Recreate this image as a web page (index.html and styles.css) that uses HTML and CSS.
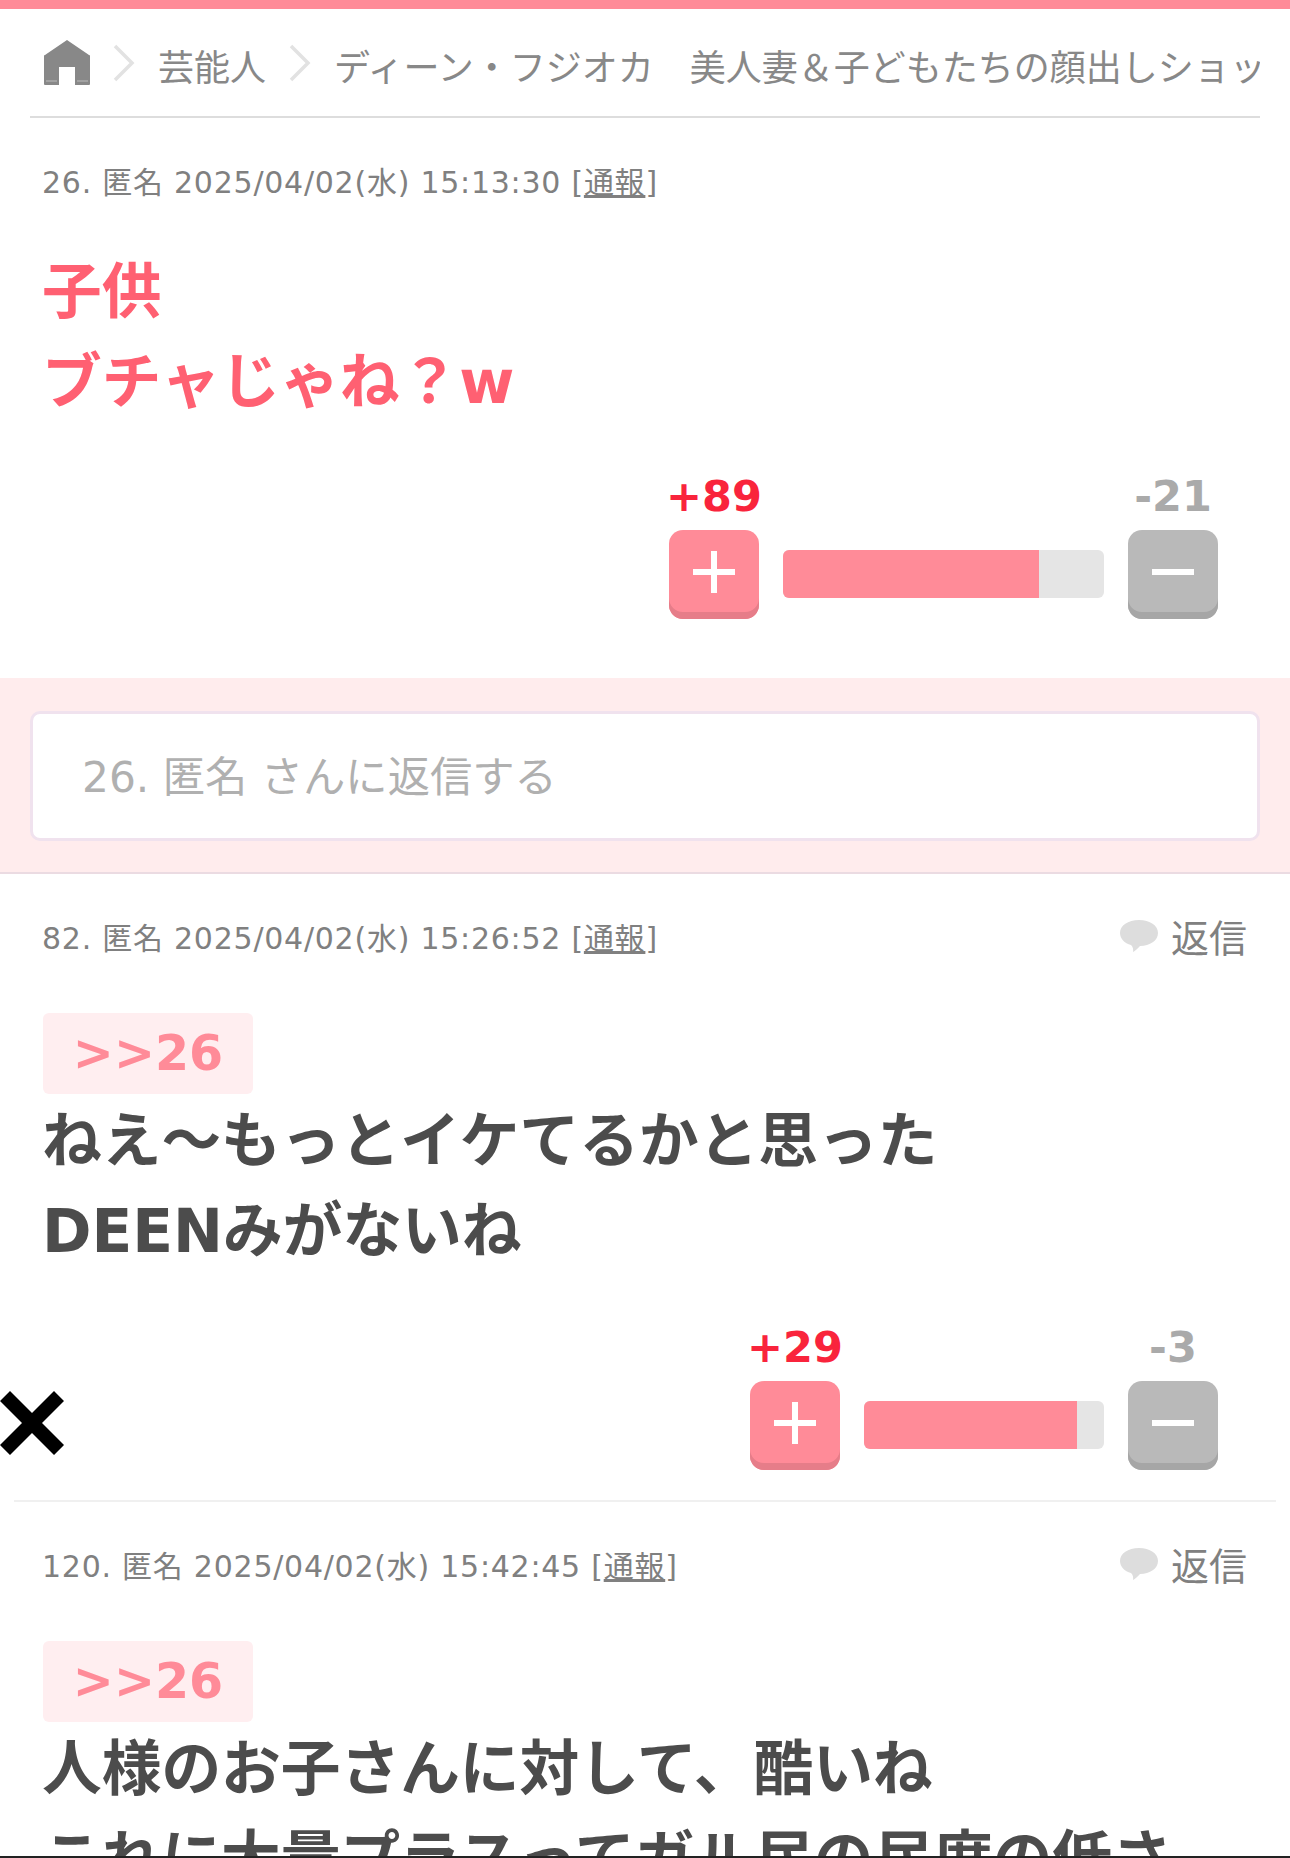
FILE: index.html
```html
<!DOCTYPE html>
<html lang="ja">
<head>
    <meta charset="UTF-8">
    <meta name="viewport" content="width=device-width, initial-scale=1.0">
    <title>ディーン・フジオカ 美人妻&子どもたちの顔出しショット</title>
    <link rel="stylesheet" href="styles.css">
</head>
<body>
    <!-- Breadcrumb -->
    <nav class="breadcrumb">
        <a class="crumb-home" href="#">
            <svg viewBox="0 0 46 46" width="46" height="46"><path d="M23 0 L45 15 a1.500 1.500 0 0 1 1 2 V44 a1 1 0 0 1 -1 1 H31 V27 H15 V45 H1 a1 1 0 0 1 -1 -1 V17 a1.500 1.500 0 0 1 1 -2 Z" fill="#888"/><path d="M2 41h11M33 41h11" stroke="#aaa" stroke-width="1.500"/></svg>
        </a>
        <svg class="crumb-sep" viewBox="0 0 22 38" width="22" height="38"><path d="M2 2 L19 19 L2 36" fill="none" stroke="#e2e2e2" stroke-width="3.500"/></svg>
        <a class="crumb-link" href="#">芸能人</a>
        <svg class="crumb-sep" viewBox="0 0 22 38" width="22" height="38"><path d="M2 2 L19 19 L2 36" fill="none" stroke="#e2e2e2" stroke-width="3.500"/></svg>
        <a class="crumb-link" href="#">ディーン・フジオカ　美人妻＆子どもたちの顔出しショット</a>
    </nav>

    <!-- Parent comment -->
    <section class="comment comment-parent">
        <div class="meta">
            <span>26. 匿名 2025/04/02(水) 15:13:30 [<a href="#">通報</a>]</span>
        </div>
        <div class="body body-hot">子供<br>ブチャじゃね？w</div>
        <div class="votes">
            <div class="vote">
                <span class="count count-plus">+89</span>
                <div class="btn btn-plus"><svg viewBox="0 0 42 42" width="42" height="42"><path d="M18 0h6v18h18v6h-18v18h-6v-18h-18v-6h18z" fill="#fff"/></svg></div>
            </div>
            <div class="bar bar-wide"><div class="bar-fill fill-89"></div></div>
            <div class="vote">
                <span class="count count-minus">-21</span>
                <div class="btn btn-minus"><svg viewBox="0 0 42 42" width="42" height="42"><path d="M0 18h42v6h-42z" fill="#fff"/></svg></div>
            </div>
        </div>
    </section>

    <!-- Reply box -->
    <section class="reply-area">
        <div class="reply-box">26. 匿名 さんに返信する</div>
    </section>

    <!-- Replies -->
    <section class="comment comment-reply">
        <div class="meta">
            <span>82. 匿名 2025/04/02(水) 15:26:52 [<a href="#">通報</a>]</span>
            <a class="reply-link" href="#">
                <svg viewBox="0 0 38 32" width="38" height="32"><path d="M19 0 C30 0 38 5.500 38 13 C38 20.500 30 26 20 26 C18 28.500 15 31 13 32 C13.500 29.500 13 27 11 25 C4.500 23.500 0 18.500 0 13 C0 5.500 8 0 19 0 Z" fill="#ddd"/></svg>
                返信
            </a>
        </div>
        <div class="anchor">&gt;&gt;26</div>
        <div class="body">ねえ〜もっとイケてるかと思った<br>DEENみがないね</div>
        <div class="votes">
            <div class="vote">
                <span class="count count-plus">+29</span>
                <div class="btn btn-plus"><svg viewBox="0 0 42 42" width="42" height="42"><path d="M18 0h6v18h18v6h-18v18h-6v-18h-18v-6h18z" fill="#fff"/></svg></div>
            </div>
            <div class="bar bar-narrow"><div class="bar-fill fill-29"></div></div>
            <div class="vote">
                <span class="count count-minus">-3</span>
                <div class="btn btn-minus"><svg viewBox="0 0 42 42" width="42" height="42"><path d="M0 18h42v6h-42z" fill="#fff"/></svg></div>
            </div>
        </div>
        <svg class="close-x" viewBox="0 0 64 64" width="64" height="64"><path d="M10 0 L32 22 L54 0 L64 10 L42 32 L64 54 L54 64 L32 42 L10 64 L0 54 L22 32 L0 10 Z" fill="#000"/></svg>
    </section>

    <section class="comment comment-reply comment-last">
        <div class="meta">
            <span>120. 匿名 2025/04/02(水) 15:42:45 [<a href="#">通報</a>]</span>
            <a class="reply-link" href="#">
                <svg viewBox="0 0 38 32" width="38" height="32"><path d="M19 0 C30 0 38 5.500 38 13 C38 20.500 30 26 20 26 C18 28.500 15 31 13 32 C13.500 29.500 13 27 11 25 C4.500 23.500 0 18.500 0 13 C0 5.500 8 0 19 0 Z" fill="#ddd"/></svg>
                返信
            </a>
        </div>
        <div class="anchor">&gt;&gt;26</div>
        <div class="body">人様のお子さんに対して、酷いね<br>これに大量プラスってガル民の民度の低さ</div>
    </section>

    <div class="bottom-line"></div>
</body>
</html>
```

FILE: styles.css
```css
/* General Styles */
html, body {
    height: 1858px;
    overflow: hidden;
}

body {
    margin: 0;
    position: relative;
    box-sizing: border-box;
    background: #fff;
    color: #4c4c4c;
    font-family: "DejaVu Sans", "Noto Sans CJK JP", sans-serif;
    border-top: 9px solid #ff8b98;
}

a {
    color: inherit;
}

/* Breadcrumb */
.breadcrumb {
    display: flex;
    align-items: center;
    gap: 23px;
    height: 107px;
    margin: 0 30px;
    padding-left: 14px;
    border-bottom: 2px solid #ddd;
    color: #888;
    font-size: 36px;
    white-space: nowrap;
    overflow: hidden;
}

.breadcrumb a {
    text-decoration: none;
}

.crumb-link {
    padding-top: 4px;
}

.crumb-home {
    display: flex;
    flex-shrink: 0;
}

.crumb-sep {
    flex-shrink: 0;
}

/* Comments */
.comment {
    position: relative;
    padding: 0 43px;
}

.comment-parent {
    height: 560px;
}

.comment-parent .body {
    margin-top: 7px;
}

.comment-reply {
    height: 628px;
    margin: 0 14px;
    padding: 0 29px;
    border-bottom: 2px solid #f0f0f0;
    box-sizing: border-box;
}

.comment-last {
    border-bottom: 0;
}

.meta {
    display: flex;
    justify-content: space-between;
    align-items: center;
    height: 123px;
    margin-left: -1px;
    color: #808080;
    font-size: 30px;
    letter-spacing: 0.75px;
}

.reply-link {
    display: flex;
    align-items: center;
    gap: 13px;
    font-size: 38px;
    letter-spacing: 0;
    text-decoration: none;
}

.anchor {
    box-sizing: border-box;
    width: 210px;
    height: 81px;
    margin: 16px 0 3px;
    border-radius: 6px;
    background: #ffeef0;
    color: #ff8b98;
    font-size: 49px;
    font-weight: bold;
    line-height: 81px;
    text-align: center;
}

.body {
    margin-left: -1px;
    color: #4c4c4c;
    font-size: 59.700px;
    font-weight: bold;
    line-height: 90px;
}

.body-hot {
    color: #ff6072;
}

/* Votes */
.votes {
    position: absolute;
    right: 72px;
    display: flex;
    align-items: flex-end;
    gap: 24px;
}

.comment-parent .votes {
    top: 354px;
}

.comment-reply .votes {
    top: 449px;
    right: 58px;
}

.vote {
    display: flex;
    flex-direction: column;
    align-items: center;
    width: 90px;
    gap: 10px;
}

.count {
    font-size: 43px;
    font-weight: bold;
    line-height: 48px;
    white-space: nowrap;
}

.count-plus {
    color: #f9243c;
}

.count-minus {
    color: #aaa;
}

.btn {
    display: flex;
    align-items: center;
    justify-content: center;
    box-sizing: border-box;
    width: 90px;
    height: 89px;
    padding-bottom: 5px;
    border-radius: 14px;
}

.btn-plus {
    background: #ff8b98;
    box-shadow: inset 0 -7px 0 #e67d89;
}

.btn-minus {
    background: #b9b9b9;
    box-shadow: inset 0 -7px 0 #a6a6a6;
}

.bar {
    align-self: flex-end;
    height: 48px;
    margin-bottom: 21px;
    border-radius: 6px;
    background: #e5e5e5;
    overflow: hidden;
}

.bar-wide {
    width: 321px;
}

.bar-narrow {
    width: 240px;
}

.bar-fill {
    height: 100%;
    background: #ff8b98;
}

.fill-89 {
    width: 79.700%;
}

.fill-29 {
    width: 88.700%;
}

/* Reply box */
.reply-area {
    box-sizing: border-box;
    height: 196px;
    padding: 33px 30px;
    background: #ffeced;
    border-bottom: 2px solid #ebdbe2;
}

.reply-box {
    box-sizing: border-box;
    height: 130px;
    padding-left: 49px;
    border: 3px solid #f0e2ee;
    border-radius: 10px;
    background: #fff;
    color: #b0b0b0;
    font-size: 42.300px;
    line-height: 128px;
}

/* Overlays */
.close-x {
    position: absolute;
    left: -14px;
    top: 517px;
}

.bottom-line {
    position: absolute;
    left: 0;
    right: 0;
    bottom: 0;
    height: 2px;
    background: #222;
}
```
